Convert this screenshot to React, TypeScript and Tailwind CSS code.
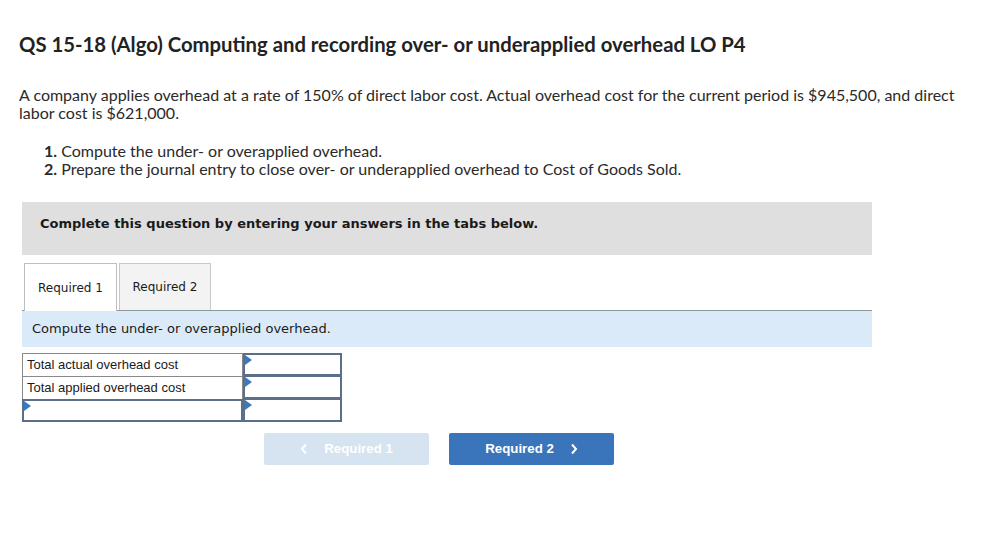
import React from "react";

function Tri() {
  return (
    <span className="absolute left-0 top-0 w-0 h-0 border-t-[5px] border-b-[5px] border-l-[7px] border-t-transparent border-b-transparent border-l-[#3b78c2]" />
  );
}

function Chevron({ dir }: { dir: "l" | "r" }) {
  return (
    <svg width="8" height="12" viewBox="0 0 8 12" className="shrink-0">
      <path
        d={dir === "l" ? "M6 1.5 L2 6 L6 10.5" : "M2 1.5 L6 6 L2 10.5"}
        fill="none"
        stroke="white"
        strokeWidth="2"
      />
    </svg>
  );
}

export default function App() {
  return (
    <div className="w-[1005px] h-[539px] bg-white text-[#1a1a1a]">
      <div className="pl-[19px] pt-[31px] font-['Lato','Open_Sans',sans-serif]">
        <h1 className="text-[20.3px] leading-[26px] font-bold text-[#222]">
          QS 15-18 (Algo) Computing and recording over- or underapplied overhead LO P4
        </h1>
        <p className="mt-[29px] text-[16px] leading-[18px] text-[#2a2a2a] pr-[40px]">
          A company applies overhead at a rate of 150% of direct labor cost. Actual overhead cost for the current period is $945,500, and direct labor cost is $621,000.
        </p>
        <ol className="mt-[20px] ml-[25px] text-[16px] leading-[18px] text-[#2a2a2a]">
          <li><span className="font-bold">1.</span> Compute the under- or overapplied overhead.</li>
          <li><span className="font-bold">2.</span> Prepare the journal entry to close over- or underapplied overhead to Cost of Goods Sold.</li>
        </ol>
      </div>

      <div className="ml-[22px] w-[850px] font-['DejaVu_Sans','Verdana',sans-serif]">
        <div className="mt-[24px] h-[53px] bg-[#dfdfdf] flex items-start pt-[14px] pl-[18px]">
          <span className="text-[13px] leading-[16px] font-bold text-[#1a1a1a]">Complete this question by entering your answers in the tabs below.</span>
        </div>

        <div className="mt-[8px] flex items-end border-b border-[#8e9a9a] h-[48px] pl-[2px] gap-[2px]">
          <div className="h-[48px] w-[93px] border border-b-0 border-[#bdbdbd] bg-white flex items-center justify-center text-[12px] text-[#1a1a1a] -mb-px">
            Required 1
          </div>
          <div className="h-[47px] w-[92px] border border-b-0 border-[#c8c8c8] bg-[#f3f3f3] flex items-center justify-center text-[12px] text-[#1a1a1a]">
            Required 2
          </div>
        </div>

        <div className="h-[36px] bg-[#daeaf8] flex items-center pl-[10px] text-[13px] text-[#1a1a1a]">
          Compute the under- or overapplied overhead.
        </div>

        <div className="mt-[6px] w-[320px] font-['Liberation_Sans',Arial,sans-serif] text-[13px] text-[#1a1a1a]">
          <div className="flex h-[23px]">
            <div className="w-[221px] border border-[#8a8a8a] border-b-0 pl-[4px] flex items-center">Total actual overhead cost</div>
            <div className="relative flex-1 border-2 border-[#5b6f88] bg-white"><Tri /></div>
          </div>
          <div className="flex h-[23px]">
            <div className="w-[221px] border border-[#8a8a8a] border-b-0 pl-[4px] flex items-center">Total applied overhead cost</div>
            <div className="relative flex-1 border-2 border-t-[1px] border-[#5b6f88] bg-white"><Tri /></div>
          </div>
          <div className="flex h-[23px]">
            <div className="relative w-[221px] border-2 border-[#5b6f88] bg-white"><Tri /></div>
            <div className="relative flex-1 border-2 border-t-[1px] border-[#5b6f88] bg-white"><Tri /></div>
          </div>
        </div>

        <div className="mt-[11px] flex gap-[20px] pl-[242px] font-['Liberation_Sans',Arial,sans-serif]">
          <button className="w-[165px] h-[32px] rounded-[2px] bg-[#d6e3f1] text-white text-[13.3px] font-bold flex items-center justify-center gap-[16px]">
            <Chevron dir="l" />
            <span>Required 1</span>
          </button>
          <button className="w-[165px] h-[32px] rounded-[2px] bg-[#3a75bc] text-white text-[13.3px] font-bold flex items-center justify-center gap-[16px]">
            <span>Required 2</span>
            <Chevron dir="r" />
          </button>
        </div>
      </div>
    </div>
  );
}
